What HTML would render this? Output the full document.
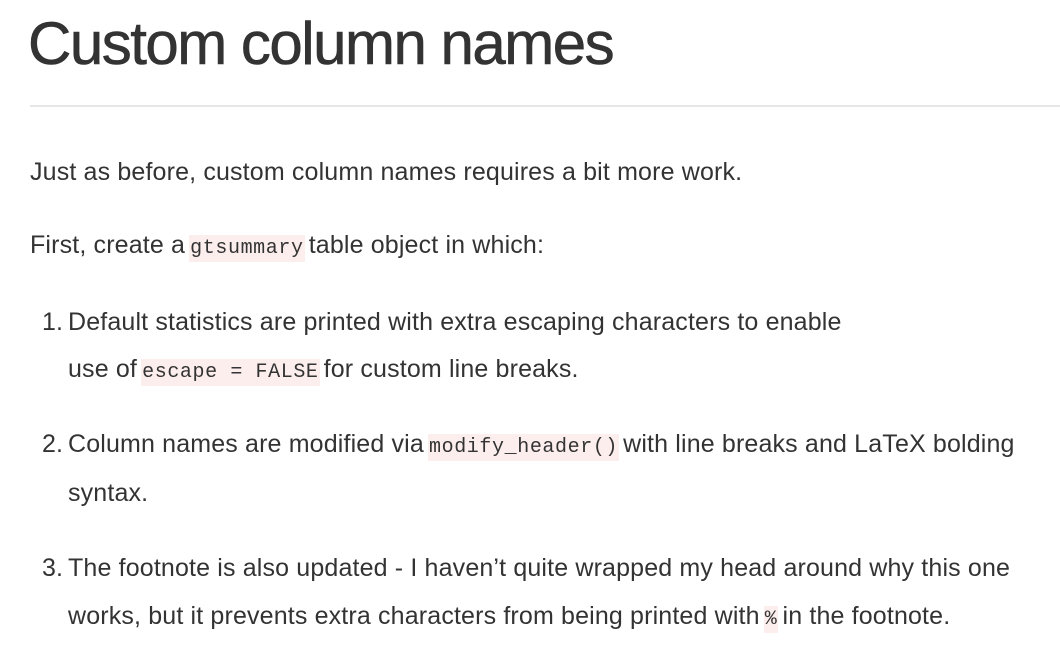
<!DOCTYPE html>
<html><head><meta charset="utf-8"><style>
body{margin:0;width:1060px;height:655px;background:#fff;overflow:hidden;font-family:"Liberation Sans",sans-serif;color:#333;}
.l{position:absolute;white-space:nowrap;font-size:25px;line-height:30px;letter-spacing:0.15px;}
h1{position:absolute;left:28px;top:6px;margin:0;font-size:60px;font-weight:normal;line-height:76px;letter-spacing:-1.5px;color:#333;-webkit-text-stroke:0.6px #333;}
.hr{position:absolute;left:30px;top:105px;width:1030px;height:2px;background:#e6e6e6;}
code{font-family:"Liberation Mono",monospace;font-size:20px;background:#fdeeee;padding:2px 1px;letter-spacing:0.6px;margin:0 -3px;}
</style></head><body>
<h1>Custom column names</h1>
<div class="hr"></div>
<div class="l" style="left:30px;top:157px">Just as before, custom column names requires a bit more work.</div>
<div class="l" style="left:30px;top:230px">First, create a <code>gtsummary</code> table object in which:</div>
<div class="l" style="left:42px;top:307px">1.</div>
<div class="l" style="left:68px;top:307px">Default statistics are printed with extra escaping characters to enable</div>
<div class="l" style="left:68px;top:354px">use of <code>escape = FALSE</code> for custom line breaks.</div>
<div class="l" style="left:42px;top:429px">2.</div>
<div class="l" style="left:68px;top:429px">Column names are modified via <code>modify_header()</code> with line breaks and LaTeX bolding</div>
<div class="l" style="left:68px;top:478px">syntax.</div>
<div class="l" style="left:42px;top:553px">3.</div>
<div class="l" style="left:68px;top:553px">The footnote is also updated - I haven’t quite wrapped my head around why this one</div>
<div class="l" style="left:68px;top:601px">works, but it prevents extra characters from being printed with <code>%</code> in the footnote.</div>
</body></html>
